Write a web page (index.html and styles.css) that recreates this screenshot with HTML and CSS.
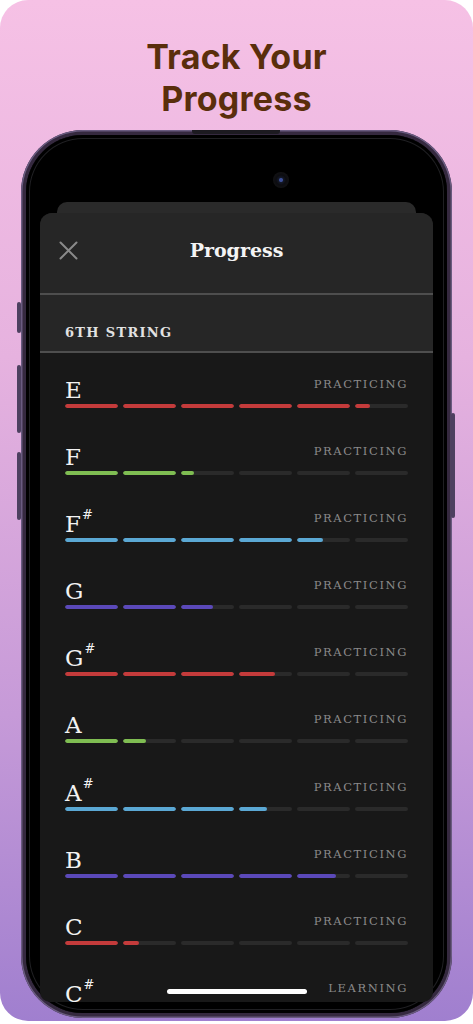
FILE: index.html
```html
<!DOCTYPE html>
<html lang="en">
<head>
<meta charset="utf-8">
<title>Track Your Progress</title>
<link rel="stylesheet" href="styles.css">
</head>
<body>
<div class="page">
  <h1 class="headline">Track Your<br>Progress</h1>
  <div class="phone">
    <span class="speaker"></span>
    <span class="btn btn-l1"></span>
    <span class="btn btn-l2"></span>
    <span class="btn btn-l3"></span>
    <span class="btn btn-r1"></span>
    <div class="bezel">
      <div class="camera"></div>
      <div class="back-card"></div>
      <div class="sheet">
        <div class="sheet-header">
          <svg class="close" width="19" height="19" viewBox="0 0 19 19"><path d="M1.5 1.5 L17.5 17.5 M17.5 1.5 L1.5 17.5" stroke="#8a8a8a" stroke-width="2" fill="none" stroke-linecap="round"/></svg>
          <div class="sheet-title">Progress</div>
          <div></div>
        </div>
        <div class="section">6TH STRING</div>
        <div class="list">
          <div class="row">
            <div class="row-top"><span class="note">E</span><span class="status">PRACTICING</span></div>
            <div class="bar red"><i class="seg"><b style="width:100%"></b></i><i class="seg"><b style="width:100%"></b></i><i class="seg"><b style="width:100%"></b></i><i class="seg"><b style="width:100%"></b></i><i class="seg"><b style="width:100%"></b></i><i class="seg"><b style="width:28%"></b></i></div>
          </div>
          <div class="row">
            <div class="row-top"><span class="note">F</span><span class="status">PRACTICING</span></div>
            <div class="bar green"><i class="seg"><b style="width:100%"></b></i><i class="seg"><b style="width:100%"></b></i><i class="seg"><b style="width:25%"></b></i><i class="seg"></i><i class="seg"></i><i class="seg"></i></div>
          </div>
          <div class="row">
            <div class="row-top"><span class="note">F<span class="sharp">#</span></span><span class="status">PRACTICING</span></div>
            <div class="bar blue"><i class="seg"><b style="width:100%"></b></i><i class="seg"><b style="width:100%"></b></i><i class="seg"><b style="width:100%"></b></i><i class="seg"><b style="width:100%"></b></i><i class="seg"><b style="width:49%"></b></i><i class="seg"></i></div>
          </div>
          <div class="row">
            <div class="row-top"><span class="note">G</span><span class="status">PRACTICING</span></div>
            <div class="bar purple"><i class="seg"><b style="width:100%"></b></i><i class="seg"><b style="width:100%"></b></i><i class="seg"><b style="width:60%"></b></i><i class="seg"></i><i class="seg"></i><i class="seg"></i></div>
          </div>
          <div class="row">
            <div class="row-top"><span class="note">G<span class="sharp">#</span></span><span class="status">PRACTICING</span></div>
            <div class="bar red"><i class="seg"><b style="width:100%"></b></i><i class="seg"><b style="width:100%"></b></i><i class="seg"><b style="width:100%"></b></i><i class="seg"><b style="width:68%"></b></i><i class="seg"></i><i class="seg"></i></div>
          </div>
          <div class="row">
            <div class="row-top"><span class="note">A</span><span class="status">PRACTICING</span></div>
            <div class="bar green"><i class="seg"><b style="width:100%"></b></i><i class="seg"><b style="width:43%"></b></i><i class="seg"></i><i class="seg"></i><i class="seg"></i><i class="seg"></i></div>
          </div>
          <div class="row">
            <div class="row-top"><span class="note">A<span class="sharp">#</span></span><span class="status">PRACTICING</span></div>
            <div class="bar blue"><i class="seg"><b style="width:100%"></b></i><i class="seg"><b style="width:100%"></b></i><i class="seg"><b style="width:100%"></b></i><i class="seg"><b style="width:52%"></b></i><i class="seg"></i><i class="seg"></i></div>
          </div>
          <div class="row">
            <div class="row-top"><span class="note">B</span><span class="status">PRACTICING</span></div>
            <div class="bar purple"><i class="seg"><b style="width:100%"></b></i><i class="seg"><b style="width:100%"></b></i><i class="seg"><b style="width:100%"></b></i><i class="seg"><b style="width:100%"></b></i><i class="seg"><b style="width:73%"></b></i><i class="seg"></i></div>
          </div>
          <div class="row">
            <div class="row-top"><span class="note">C</span><span class="status">PRACTICING</span></div>
            <div class="bar red"><i class="seg"><b style="width:100%"></b></i><i class="seg"><b style="width:30%"></b></i><i class="seg"></i><i class="seg"></i><i class="seg"></i><i class="seg"></i></div>
          </div>
          <div class="row">
            <div class="row-top"><span class="note">C<span class="sharp">#</span></span><span class="status">LEARNING</span></div>
            <div class="bar green"><i class="seg"></i><i class="seg"></i><i class="seg"></i><i class="seg"></i><i class="seg"></i><i class="seg"></i></div>
          </div>
        </div>
      </div>
    </div>
    <span class="home-indicator"></span>
  </div>
</div>
</body>
</html>
```
FILE: styles.css
```css
* { box-sizing: border-box; }
html, body { margin: 0; padding: 0; background: #ffffff; }
body { width: 473px; height: 1024px; overflow: hidden; }

.page {
  width: 473px;
  height: 1021px;
  border-radius: 28px;
  background: linear-gradient(180deg, #f6c1e5 0%, #e6b2df 35%, #c69ad8 70%, #a07fcf 100%);
  display: flex;
  flex-direction: column;
  align-items: flex-start;
  overflow: hidden;
}

.headline {
  margin: 36px 0 0;
  width: 100%;
  text-align: center;
  font-family: Inter, "Noto Sans", sans-serif;
  font-weight: 700;
  font-size: 34px;
  line-height: 42px;
  color: #5a2e0c;
  letter-spacing: 0.2px;
}

.phone {
  position: relative;
  margin: 10px 0 0 21px;
  width: 431px;
  height: 888px;
  border-radius: 62px;
  padding: 5px;
  background: #35293f;
  box-shadow: inset 0 0 0 1.5px #6a5b80;
}

.speaker {
  position: absolute;
  top: 0;
  left: 171px;
  width: 88px;
  height: 4px;
  background: #1c1a20;
  border-radius: 0 0 3px 3px;
}

.btn { position: absolute; width: 4px; background: #4d4060; border-radius: 2px; }
.btn-l1 { left: -4px; top: 172px; height: 31px; }
.btn-l2 { left: -4px; top: 235px; height: 68px; }
.btn-l3 { left: -4px; top: 322px; height: 68px; }
.btn-r1 { right: -3px; top: 283px; height: 105px; }

.bezel {
  height: 100%;
  border-radius: 57px;
  background: #000;
  box-shadow: inset 0 0 0 3px #000, inset 0 0 0 4px #1f1f22;
  padding: 0 14px 11px;
  display: flex;
  flex-direction: column;
}

.camera {
  flex: none;
  margin: 37px 0 0 233px;
  width: 16px;
  height: 16px;
  border-radius: 50%;
  background: radial-gradient(circle at 50% 50%, #3c4f9a 0 1.5px, #141826 2.5px, #0c0c10 5px, #121214 8px);
}

.back-card {
  flex: none;
  margin: 14px 17px 0;
  height: 11px;
  background: #2a2a2a;
  border-radius: 10px 10px 0 0;
}

.sheet {
  flex: 1;
  min-height: 0;
  background: #181818;
  border-radius: 12px 12px 10px 10px;
  overflow: hidden;
  display: flex;
  flex-direction: column;
}

.sheet-header {
  flex: none;
  height: 82px;
  padding: 0 19px 6px;
  background: #262626;
  border-bottom: 2px solid #4e4e4e;
  display: grid;
  grid-template-columns: 1fr auto 1fr;
  align-items: center;
}

.close { display: block; }

.sheet-title {
  font-family: "DejaVu Serif", "Liberation Serif", serif;
  font-weight: 700;
  font-size: 19px;
  color: #f4f4f4;
  line-height: 24px;
}

.section {
  flex: none;
  height: 58px;
  padding: 31px 25px 0;
  background: #262626;
  border-bottom: 2px solid #4e4e4e;
  font-family: "DejaVu Serif", "Liberation Serif", serif;
  font-weight: 700;
  font-size: 13px;
  line-height: 14px;
  letter-spacing: 1.3px;
  color: #e2e2e2;
}

.list {
  padding: 0 25px;
}

.row {
  height: 67.1px;
  padding-top: 25px;
}

.row-top {
  display: flex;
  justify-content: space-between;
  align-items: flex-start;
  height: 24px;
}

.note {
  font-family: "DejaVu Serif", "Liberation Serif", serif;
  font-size: 23px;
  line-height: 24px;
  color: #f2f2f2;
}

.sharp {
  font-size: 13px;
  line-height: 0;
  vertical-align: 13px;
  margin-left: 1px;
}

.status {
  font-family: "DejaVu Serif", "Liberation Serif", serif;
  font-size: 11.5px;
  line-height: 12px;
  letter-spacing: 1.6px;
  margin-right: 0;
  color: #8a8a8a;
}

.bar {
  margin-top: 2px;
  display: flex;
  gap: 5px;
  height: 4px;
}

.seg {
  flex: 1;
  height: 4px;
  border-radius: 2px;
  background: #2a2a2a;
  overflow: hidden;
  display: flex;
}

.seg b {
  display: block;
  height: 100%;
  border-radius: 2px;
}

.red .seg b { background: #c43b3b; }
.green .seg b { background: #7fbd52; }
.blue .seg b { background: #5ba8d4; }
.purple .seg b { background: #5b49b9; }

.home-indicator {
  position: absolute;
  left: 146px;
  top: 859px;
  width: 140px;
  height: 5px;
  border-radius: 3px;
  background: #ffffff;
}
```
